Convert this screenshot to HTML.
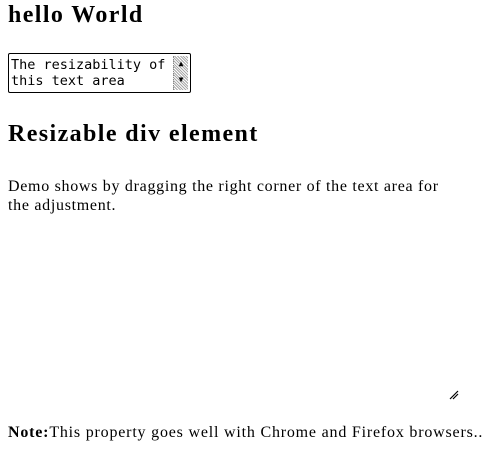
<!DOCTYPE html>
<html><head><style>
body{margin:0;width:498px;height:449px;background:#fff;font-family:"Liberation Serif",serif;color:#000;position:relative;overflow:hidden}
.a{position:absolute;margin:0;white-space:nowrap}
h1,h2{font-size:24px;font-weight:bold;letter-spacing:1.4px}
.ta{position:absolute;left:8px;top:53px;width:183px;height:40px;border:1px solid #000;border-radius:2px;font-family:"DejaVu Sans Mono","Liberation Mono",monospace;font-size:13.5px;line-height:16px;box-sizing:border-box;padding:3px 0 0 2px;overflow:hidden}
.sb{position:absolute;right:2px;top:2px;width:14px;height:34px;background:repeating-linear-gradient(45deg,#aaa 0 1px,#fff 1px 2px);border-left:1px dotted #888}
p{font-size:16px;line-height:19px;letter-spacing:0.7px}
</style></head><body>
<h1 class="a" style="left:8px;top:2px">hello World</h1>
<div class="ta">The resizability of<br>this text area<div class="sb"><div style="font-size:8px;line-height:16px;text-align:center">▲<br>▼</div></div></div>
<h2 class="a" style="left:8px;top:121px">Resizable div element</h2>
<p class="a" style="left:8px;top:177px;white-space:normal;width:448px">Demo shows by dragging the right corner of the text area for the adjustment.</p>
<svg class="a" style="left:448px;top:389px" width="12" height="12"><path d="M2 10L10 2M5 10L10 5" stroke="#000" stroke-width="1.2"/></svg>
<p class="a" style="left:8px;top:423px;letter-spacing:0.8px"><b>Note:</b>This property goes well with Chrome and Firefox browsers..</p>
</body></html>
